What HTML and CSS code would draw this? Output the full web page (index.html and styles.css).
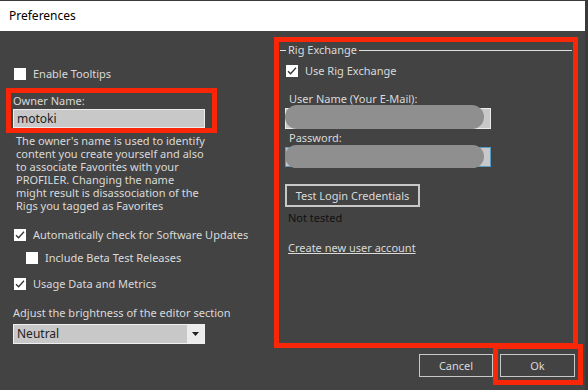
FILE: index.html
```html
<!DOCTYPE html>
<html>
    <head>
        <title>Preferences</title>
        <link rel="stylesheet" href="styles.css">
    </head>
    <body>
        <div class="window">
            <div class="titlebar">Preferences</div>

            <div class="main">
                <div class="left-col">
                    <div class="check-row tooltips-row">
                        <span class="box"></span>Enable Tooltips
                    </div>

                    <div class="owner-box">
                        <div class="field-label">Owner Name:</div>
                        <div class="text-input owner-input">motoki</div>
                    </div>

                    <p class="owner-note">
                        The owner's name is used to identify<br>
                        content you create yourself and also<br>
                        to associate Favorites with your<br>
                        PROFILER. Changing the name<br>
                        might result is disassociation of the<br>
                        Rigs you tagged as Favorites
                    </p>

                    <div class="check-row updates-row">
                        <span class="box"><svg width="12" height="12" viewBox="0 0 12 12"><path d="M2 6.2 L4.6 8.8 L10 2.8" fill="none" stroke="#333" stroke-width="1.3"/></svg></span>Automatically check for Software Updates
                    </div>
                    <div class="check-row beta-row">
                        <span class="box"></span>Include Beta Test Releases
                    </div>
                    <div class="check-row usage-row">
                        <span class="box"><svg width="12" height="12" viewBox="0 0 12 12"><path d="M2 6.2 L4.6 8.8 L10 2.8" fill="none" stroke="#333" stroke-width="1.3"/></svg></span>Usage Data and Metrics
                    </div>

                    <div class="field-label brightness-label">Adjust the brightness of the editor section</div>
                    <div class="select">
                        <span class="select-value">Neutral</span>
                        <span class="select-arrow"><svg width="7" height="4" viewBox="0 0 7 4"><path d="M0 0 H7 L3.5 4 Z" fill="#222"/></svg></span>
                    </div>
                </div>

                <div class="right-col">
                    <div class="rig-panel">
                        <div class="group-title">
                            <span class="group-line short"></span>
                            <span class="group-name">Rig Exchange</span>
                            <span class="group-line"></span>
                        </div>

                        <div class="check-row rig-row">
                            <span class="box"><svg width="12" height="12" viewBox="0 0 12 12"><path d="M2 6.2 L4.6 8.8 L10 2.8" fill="none" stroke="#333" stroke-width="1.3"/></svg></span>Use Rig Exchange
                        </div>

                        <div class="field-label rig-label user-label">User Name (Your E-Mail):</div>
                        <div class="text-input rig-input user-input"><span class="blur"></span></div>

                        <div class="field-label rig-label">Password:</div>
                        <div class="text-input rig-input pass-input"><span class="blur"></span></div>

                        <div class="test-button">Test Login Credentials</div>
                        <div class="status">Not tested</div>
                        <div class="account-link">Create new user account</div>
                    </div>
                </div>
            </div>

            <div class="footer">
                <div class="dialog-button">Cancel</div>
                <div class="dialog-button ok-button">Ok</div>
            </div>
        </div>
    </body>
</html>
```

FILE: styles.css
```css
body{
    margin: 0;
    background-color: rgb(67, 67, 67);
    font-family: "Noto Sans", "Open Sans", sans-serif;
    font-size: 11px;
    color: rgb(218, 218, 218);
}
.window{
    width: 588px;
    height: 390px;
    box-sizing: border-box;
    border-top: 1px solid rgb(58, 58, 58);
    border-right: 3px solid rgb(58, 58, 58);
    overflow: hidden;
}
.titlebar{
    height: 30px;
    line-height: 30px;
    padding-left: 9px;
    background-color: white;
    color: black;
    font-size: 12px;
}
.main{
    display: flex;
}
.left-col{
    width: 274px;
    display: flex;
    flex-direction: column;
    align-items: flex-start;
}
.check-row{
    display: flex;
    align-items: center;
    height: 12px;
    line-height: 12px;
    margin-left: 14px;
    white-space: nowrap;
}
.box{
    width: 12px;
    height: 12px;
    margin-right: 7px;
    background-color: white;
    flex-shrink: 0;
}
.box svg{
    display: block;
}
.tooltips-row{
    margin-top: 37px;
}
.owner-box{
    margin-top: 8px;
    margin-left: 6px;
    width: 199px;
    border: 5px solid rgb(250, 38, 8);
    padding: 1px 0 0 2px;
    box-sizing: content-box;
}
.field-label{
    height: 14px;
    line-height: 14px;
    white-space: nowrap;
}
.text-input{
    box-sizing: border-box;
    border: 1px solid rgb(236, 236, 236);
    background-color: rgb(200, 200, 200);
    color: rgb(34, 34, 34);
}
.owner-input{
    margin-top: 1px;
    width: 192px;
    height: 19px;
    line-height: 17px;
    padding-left: 3px;
    font-size: 12px;
}
.owner-note{
    margin: 1px 0 0 16px;
    line-height: 13px;
    white-space: nowrap;
}
.updates-row{
    margin-top: 17px;
}
.beta-row{
    margin-top: 11px;
    margin-left: 26px;
}
.usage-row{
    margin-top: 14px;
}
.brightness-label{
    margin-top: 16px;
    margin-left: 13px;
}
.select{
    margin-top: 4px;
    margin-left: 13px;
    width: 192px;
    height: 20px;
    box-sizing: border-box;
    border: 1px solid rgb(240, 240, 240);
    background-color: rgb(200, 200, 200);
    display: flex;
}
.select-value{
    flex: 1;
    padding-left: 3px;
    line-height: 18px;
    font-size: 12px;
    color: rgb(34, 34, 34);
}
.select-arrow{
    width: 17px;
    background-color: rgb(236, 236, 236);
    display: flex;
    align-items: center;
    justify-content: center;
}
.right-col{
    margin-top: 6px;
}
.rig-panel{
    width: 304px;
    height: 311px;
    box-sizing: border-box;
    border: 5px solid rgb(250, 38, 8);
    display: flex;
    flex-direction: column;
    align-items: flex-start;
}
.group-title{
    margin: 1px 1px 0 1px;
    align-self: stretch;
    height: 14px;
    display: flex;
    align-items: center;
}
.group-line{
    flex: 1;
    height: 1px;
    background-color: rgb(224, 224, 224);
}
.group-line.short{
    flex: none;
    width: 6px;
}
.group-name{
    padding: 0 2px 0 2px;
    line-height: 14px;
}
.rig-row{
    margin-top: 8px;
    margin-left: 7px;
}
.rig-label{
    margin-left: 10px;
}
.user-label{
    margin-top: 15px;
}
.rig-input{
    position: relative;
    margin-top: 2px;
    margin-left: 6px;
    width: 206px;
    height: 21px;
    margin-bottom: 2px;
}
.pass-input{
    height: 20px;
    border-color: rgb(90, 155, 196);
}
.blur{
    position: absolute;
    left: -1px;
    top: -4px;
    width: 199px;
    height: 24px;
    border-radius: 12px;
    background-color: rgb(143, 143, 143);
}
.pass-input .blur{
    top: -3px;
    height: 23px;
}
.test-button{
    margin-top: 15px;
    margin-left: 6px;
    width: 135px;
    height: 23px;
    box-sizing: border-box;
    border: 2px solid rgb(200, 200, 200);
    text-align: center;
    line-height: 19px;
}
.status{
    margin-top: 4px;
    margin-left: 9px;
    line-height: 14px;
    color: rgb(17, 17, 17);
}
.account-link{
    margin-top: 16px;
    margin-left: 9px;
    line-height: 14px;
    text-decoration: underline;
}
.footer{
    display: flex;
    justify-content: flex-end;
    gap: 7px;
    margin-top: 6px;
    padding-right: 10px;
}
.dialog-button{
    width: 74px;
    height: 23px;
    box-sizing: border-box;
    border: 1px solid rgb(200, 200, 200);
    text-align: center;
    line-height: 21px;
}
.ok-button{
    width: 75px;
    position: relative;
}
.ok-button::after{
    content: "";
    position: absolute;
    top: -11px;
    left: -8px;
    right: -9px;
    bottom: -9px;
    border: 5px solid rgb(250, 38, 8);
}
```
